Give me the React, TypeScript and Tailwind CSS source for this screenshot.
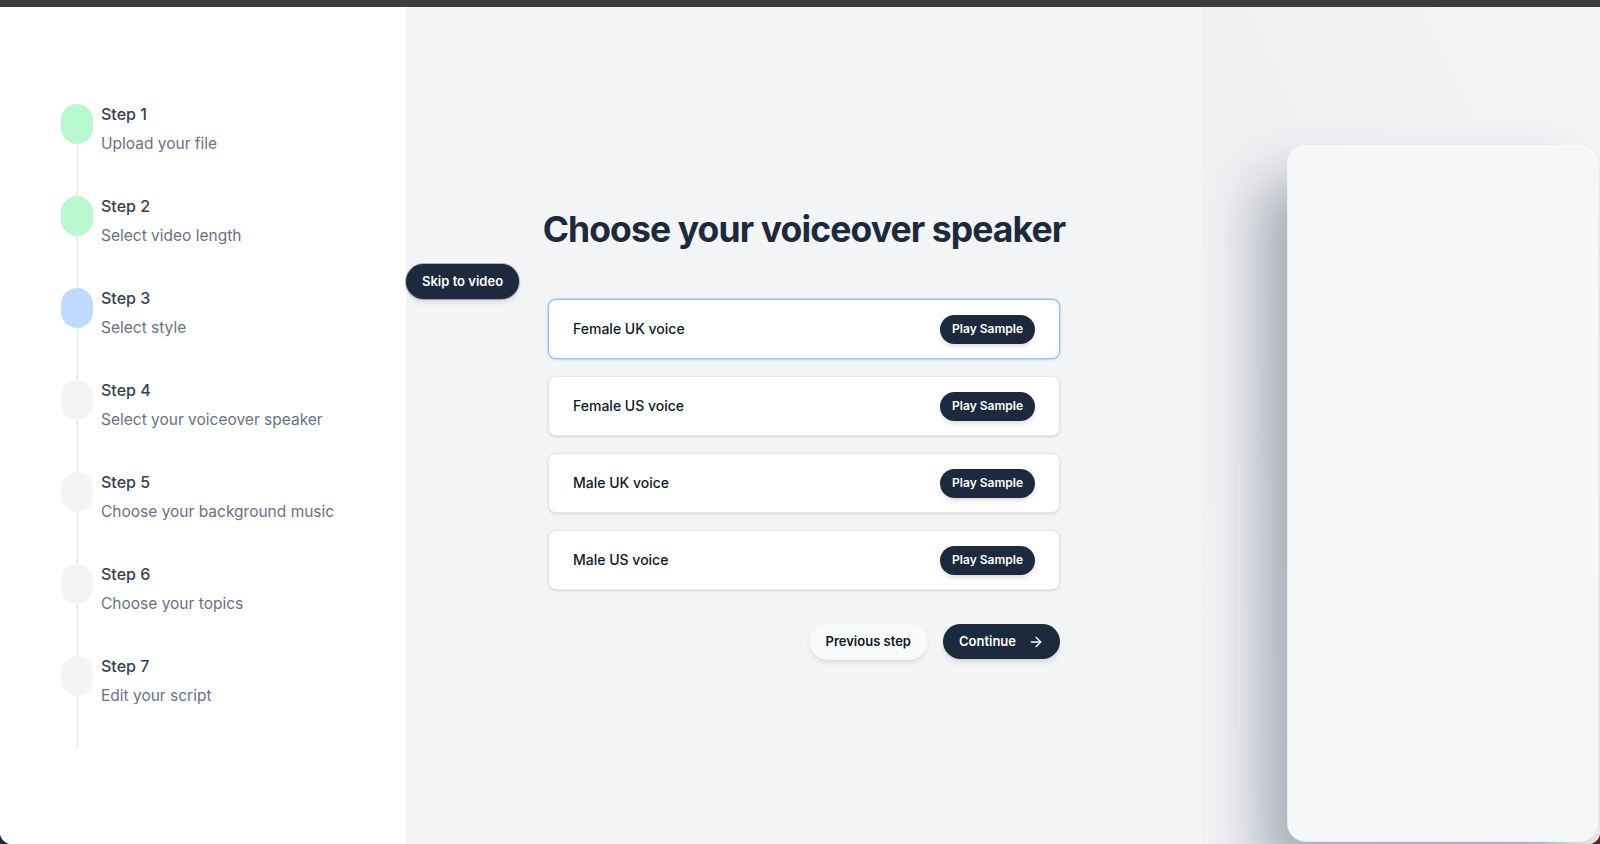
import { ArrowRight } from "lucide-react";

type Step = {
  title: string;
  label: string;
  state: "done" | "current" | "todo";
};

const steps: Step[] = [
  { title: "Step 1", label: "Upload your file", state: "done" },
  { title: "Step 2", label: "Select video length", state: "done" },
  { title: "Step 3", label: "Select style", state: "current" },
  { title: "Step 4", label: "Select your voiceover speaker", state: "todo" },
  { title: "Step 5", label: "Choose your background music", state: "todo" },
  { title: "Step 6", label: "Choose your topics", state: "todo" },
  { title: "Step 7", label: "Edit your script", state: "todo" },
];

const voices = ["Female UK voice", "Female US voice", "Male UK voice", "Male US voice"];

const dotColor = {
  done: "bg-green-200",
  current: "bg-blue-200",
  todo: "bg-gray-100",
};

const App = () => {
  return (
    <div
      className="w-[1600px] h-[844px] flex flex-col bg-gradient-to-r from-[#1e293b] via-[#1e293b] to-[#5a2a12] overflow-hidden"
      style={{ fontFamily: "Inter, 'Noto Sans', sans-serif" }}
    >
      {/* window top strip */}
      <div className="h-[7px] bg-[#3d3d3d] shrink-0" />

      <div className="flex-1 flex rounded-b-[12px] overflow-hidden bg-white">
        {/* sidebar with steps */}
        <aside className="w-[406px] shrink-0 bg-white pl-[61px] pt-[97px]">
          {steps.map((step) => (
            <div key={step.title} className="flex">
              <div className="flex flex-col items-center w-8">
                <span className={`w-8 h-10 rounded-full ${dotColor[step.state]}`} />
                <span className="w-px h-[52px] bg-gray-200" />
              </div>
              <div className="ml-2 -mt-0.5">
                <p className="text-base leading-6 font-medium text-gray-700">{step.title}</p>
                <p className="mt-1.5 text-[15.5px] leading-6 text-gray-500">{step.label}</p>
              </div>
            </div>
          ))}
        </aside>

        {/* main selection area */}
        <main className="relative w-[796px] shrink-0 bg-gray-100 flex flex-col items-center justify-center pt-[22px]">
          <button className="absolute left-0 top-[257px] h-[35px] px-4 rounded-full bg-slate-800 text-white text-[13px] font-semibold shadow-md ring-1 ring-slate-600/40">
            Skip to video
          </button>

          <div className="w-[512px]">
            <h1 className="-mx-10 -mt-1 text-center whitespace-nowrap text-[35.5px] leading-10 font-bold tracking-tight text-slate-800">
              Choose your voiceover speaker
            </h1>

            <div className="mt-[49px] flex flex-col gap-[17px]">
              {voices.map((voice, i) => (
                <div
                  key={voice}
                  className={`h-[60px] flex items-center justify-between px-6 bg-white rounded-lg ${
                    i === 0
                      ? "border border-blue-300 ring-1 ring-blue-200 shadow-sm"
                      : "border border-gray-200 shadow-sm"
                  }`}
                >
                  <span className="text-sm font-medium text-gray-900">{voice}</span>
                  <button className="h-[29px] px-3 rounded-full bg-slate-800 text-white text-xs font-semibold shadow-md">
                    Play Sample
                  </button>
                </div>
              ))}
            </div>

            <div className="mt-[34px] flex justify-end gap-4">
              <button className="h-[35px] px-4 rounded-full bg-gray-50 text-gray-900 text-[13px] font-semibold shadow-md ring-1 ring-gray-100">
                Previous step
              </button>
              <button className="h-[35px] px-4 rounded-full bg-slate-800 text-white text-[13px] font-semibold shadow-md flex items-center gap-3">
                Continue
                <ArrowRight className="h-4 w-4" strokeWidth={2} />
              </button>
            </div>
          </div>
        </main>

        {/* preview area */}
        <section className="flex-1 bg-gradient-to-bl from-[#f3f4f6] via-[#eff0f2] to-[#f2f3f5] flex pl-[86px] pt-[139px] pb-[3px] pr-[3px]">
          <div className="flex-1 rounded-[18px] bg-[#f6f7f9] ring-1 ring-white/70 shadow-[-28px_36px_56px_rgba(30,41,59,0.35)]" />
        </section>
      </div>
    </div>
  );
};

export default App;
